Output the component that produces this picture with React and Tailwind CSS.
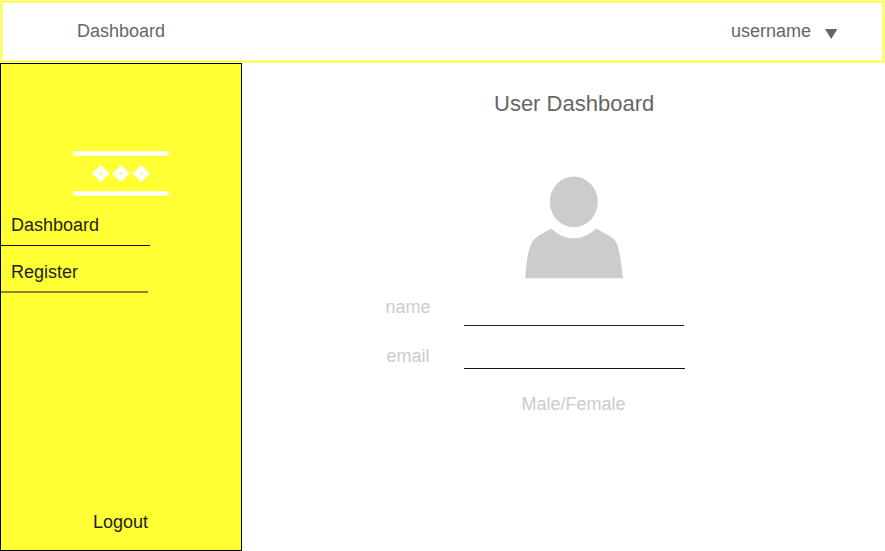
function NavItem({ label, className }) {
  return <a className={`block pl-[10px] text-[#1f1f1f] ${className}`}>{label}</a>;
}

function Logo() {
  return (
    <svg className="ml-[72px] mt-[87px] block h-[45px] w-[96px]" viewBox="0 0 96 45" aria-hidden="true">
      <path d="M0.3 2.5H95.6M0.3 42.5H95.6" stroke="#fff" strokeWidth="4.4" />
      <g fill="#fff" fillRule="evenodd">
        <path d="M19 22.5L27.8 14L36.5 22.5L27.8 31ZM27.8 21L26.3 22.5L27.8 24L29.3 22.5Z" />
        <path d="M39.3 22.5L48 14L56.7 22.5L48 31ZM48 21L46.5 22.5L48 24L49.5 22.5Z" />
        <path d="M59.5 22.5L68.2 14L76.9 22.5L68.2 31ZM68.2 21L66.7 22.5L68.2 24L69.7 22.5Z" />
      </g>
    </svg>
  );
}

function Avatar() {
  return (
    <svg className="ml-[283px] mt-[60px] block h-[103px] w-[99px]" viewBox="0 0 99 103" aria-hidden="true">
      <g fill="#ccc">
        <ellipse cx="48.8" cy="25.9" rx="24" ry="25.4" />
        <path d="M0.2 102.2C1 92 2 79 5.2 70C8 62 15 59 23.5 54.1Q26 52 28.5 54.2C40 65 57 65 69 54.2Q71.5 52 74 54.1L84.5 60C91 63.5 93 69 94.2 76C96 85 97 94 98 102.2Z" />
      </g>
    </svg>
  );
}

export default function App() {
  return (
    <div className="flex h-[551px] w-[885px] flex-col overflow-hidden bg-white font-['Liberation_Sans',Arial,sans-serif] text-[18px] leading-5">
      <header className="flex h-[63px] shrink-0 justify-between pl-[77px] pr-[47px] pt-[21px] text-[#666] shadow-[inset_0_0_0_1px_#ffff99,inset_0_0_0_2px_#ffff33,inset_0_0_0_3px_#ffff99]">
        <span>Dashboard</span>
        <div className="flex">
          <span>username</span>
          <svg className="ml-[14px] mt-[8px] h-[10px] w-[13px]" viewBox="0 0 13 10">
            <path d="M0 0H12.4L6.2 10Z" fill="#666" />
          </svg>
        </div>
      </header>
      <div className="flex min-h-0 flex-1">
        <aside className="flex w-[242px] shrink-0 flex-col border border-black bg-[#ffff33]">
          <Logo />
          <nav>
            <NavItem label="Dashboard" className="mt-[19px]" />
            <div className="mt-[10px] h-px w-[148.5px] bg-[#111]" />
            <NavItem label="Register" className="mt-[16px]" />
            <div className="mt-[9px] h-[2px] w-[147px] bg-[#88882a]" />
          </nav>
          <a className="mb-[18px] ml-[92px] mt-auto text-[#1f1f1f]">Logout</a>
        </aside>
        <main className="flex flex-1 flex-col">
          <h1 className="ml-[252px] mt-[29px] text-[22px] leading-6 text-[#666]">User Dashboard</h1>
          <Avatar />
          <form className="text-[#ccc]">
            <div className="ml-[143.5px] mt-[18px] flex h-[29px]">
              <label className="w-[78.5px]">name</label>
              <div className="w-[220px] border-b border-[#222]" />
            </div>
            <div className="ml-[144.5px] mt-[20px] flex h-[23px]">
              <label className="w-[77px]">email</label>
              <div className="w-[221px] border-b border-[#111]" />
            </div>
            <p className="ml-[279.5px] mt-[25px]">Male/Female</p>
          </form>
        </main>
      </div>
    </div>
  );
}
